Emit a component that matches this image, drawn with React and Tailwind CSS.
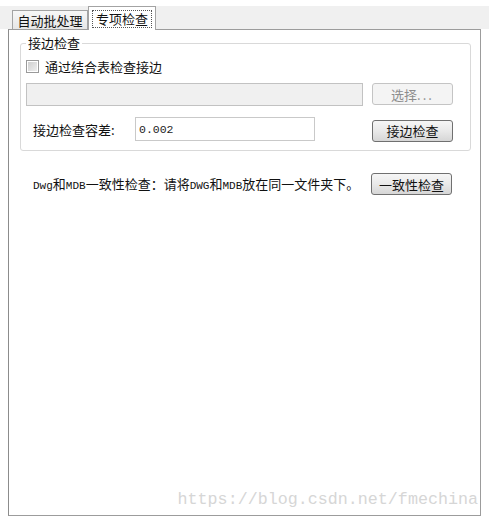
import React from 'react';

const cjk = { fontFamily: '"Noto Sans CJK SC", "Noto Sans", sans-serif' };

const Btn = ({ children, disabled }) => (
  <button
    className={
      disabled
        ? 'w-[81px] h-[22px] shrink-0 rounded-[3px] border border-[#c4c4c4] bg-[#f4f4f4] text-[13px] leading-none text-[#8d8d8d]'
        : 'w-[81px] h-[22px] shrink-0 rounded-[3px] border border-[#707070] bg-gradient-to-b from-[#f6f6f6] via-[#e9e9e9] to-[#d6d6d6] text-[13px] leading-none text-[#111]'
    }
    style={cjk}
  >
    {children}
  </button>
);

const Mono = ({ children }) => (
  <span className="text-[11px]" style={{ fontFamily: '"Liberation Mono", monospace' }}>
    {children}
  </span>
);

export default function App() {
  return (
    <div className="w-[489px] h-[522px] bg-white pt-[6px] text-[#111]" style={cjk}>
      {/* 탭 줄 */}
      <div className="h-[23px] bg-[#f0f0f0] flex items-end pl-[12px]">
        <div className="h-[19px] w-[76px] border border-b-0 border-[#a3a3a3] bg-gradient-to-b from-[#f7f7f7] to-[#e6e6e6] flex items-center justify-center text-[13px] leading-none">
          自动批处理
        </div>
        <div className="relative z-10 -mb-px h-[24px] w-[68px] border border-b-0 border-[#a3a3a3] bg-white flex items-center justify-center">
          <span className="border border-dotted border-[#555] px-[3px] h-[18px] flex items-center text-[13px] leading-none">
            专项检查
          </span>
        </div>
      </div>

      {/* 탭 패널 */}
      <div className="relative mx-[8px] h-[487px] border border-[#9c9c9c] border-l-[#8c8c8c] pt-[13px]">
        {/* 그룹박스 */}
        <div className="relative ml-[11px] w-[451px] h-[108px] rounded-[3px] border border-[#d9d9d9] pl-[5px] pr-[17px] pt-[14px]">
          <span className="absolute -top-[9px] left-[5px] bg-white px-[2px] text-[13px] leading-[16px]">
            接边检查
          </span>
          <div className="flex items-center h-[17px] gap-[6px]">
            <span className="w-[13px] h-[13px] border border-[#9a9a9a] bg-white p-px">
              <span className="block w-full h-full bg-gradient-to-br from-[#cfcfcf] to-[#eeeeee]" />
            </span>
            <span className="text-[13px] leading-none">通过结合表检查接边</span>
          </div>
          <div className="flex items-start mt-[8px] gap-[9px]">
            <div className="w-[338px] h-[23px] border border-[#c2c2c2] bg-[#f0f0f0]" />
            <Btn disabled>
              选择<span className="tracking-[2px]">...</span>
            </Btn>
          </div>
          <div className="flex items-center mt-[11px]">
            <span className="ml-[7px] w-[102px] text-[13px] leading-none">接边检查容差:</span>
            <div className="w-[180px] h-[24px] border border-[#c9c9c9] bg-white flex items-center pl-[3px]">
              <span className="text-[11.5px] text-[#222]" style={{ fontFamily: '"Liberation Mono", monospace' }}>
                0.002
              </span>
            </div>
            <div className="ml-auto">
              <Btn>接边检查</Btn>
            </div>
          </div>
        </div>

        {/* 일치성 검사 */}
        <div className="ml-[24px] w-[419px] mt-[22px] flex items-center justify-between">
          <span className="text-[13px] leading-none">
            <Mono>Dwg</Mono>和<Mono>MDB</Mono>一致性检查：请将<Mono>DWG</Mono>和<Mono>MDB</Mono>放在同一文件夹下。
          </span>
          <Btn>一致性检查</Btn>
        </div>

        {/* 워터마크 */}
        <span
          className="absolute right-[2px] bottom-[6px] text-[16.7px] leading-none text-[#d6d6d6]"
          style={{ fontFamily: '"Liberation Mono", monospace' }}
        >
          https://blog.csdn.net/fmechina
        </span>
      </div>
    </div>
  );
}
